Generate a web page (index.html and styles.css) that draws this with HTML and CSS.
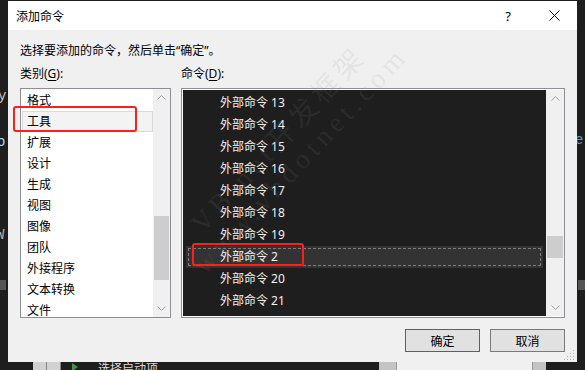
FILE: index.html
```html
<!DOCTYPE html>
<html lang="zh-CN">
<head>
    <meta charset="UTF-8">
    <title>添加命令</title>
    <link rel="stylesheet" href="styles.css">
</head>
<body>
    <!-- editor behind the dialog -->
    <span class="bg-glyph g1">y</span>
    <span class="bg-glyph g2">o</span>
    <span class="bg-glyph g3">W</span>
    <span class="bg-block b1"></span>
    <span class="bg-glyph g4">e</span>
    <span class="bg-block b2"></span>

    <div class="dialog">
        <div class="titlebar">
            <div class="title">添加命令</div>
            <div class="cap-btn">?</div>
            <div class="cap-btn">
                <svg width="11" height="11" viewBox="0 0 11 11"><path d="M0.5 0.5 L10.5 10.5 M10.5 0.5 L0.5 10.5" stroke="#000" stroke-width="1" fill="none"/></svg>
            </div>
        </div>
        <div class="content">
            <div class="prompt">选择要添加的命令，然后单击“确定”。</div>
            <div class="columns">
                <div class="label">类别(<u>G</u>):</div>
                <div class="label">命令(<u>D</u>):</div>

                <div class="list cat-list">
                    <div class="cat-items">
                        <div class="cat-item">格式</div>
                        <div class="cat-item selected">工具</div>
                        <div class="cat-item">扩展</div>
                        <div class="cat-item">设计</div>
                        <div class="cat-item">生成</div>
                        <div class="cat-item">视图</div>
                        <div class="cat-item">图像</div>
                        <div class="cat-item">团队</div>
                        <div class="cat-item">外接程序</div>
                        <div class="cat-item">文本转换</div>
                        <div class="cat-item">文件</div>
                    </div>
                    <div class="scroll cat-scroll">
                        <div class="arrow"><svg width="9" height="5" viewBox="0 0 9 5"><path d="M0.5 4.5 L4.5 0.5 L8.5 4.5" stroke="#a0a0a0" fill="none"/></svg></div>
                        <div class="track"><div class="thumb"></div></div>
                        <div class="arrow"><svg width="9" height="5" viewBox="0 0 9 5"><path d="M0.5 0.5 L4.5 4.5 L8.5 0.5" stroke="#a0a0a0" fill="none"/></svg></div>
                    </div>
                </div>

                <div class="list cmd-list">
                    <div class="cmd-items">
                        <div class="cmd-item">外部命令 13</div>
                        <div class="cmd-item">外部命令 14</div>
                        <div class="cmd-item">外部命令 15</div>
                        <div class="cmd-item">外部命令 16</div>
                        <div class="cmd-item">外部命令 17</div>
                        <div class="cmd-item">外部命令 18</div>
                        <div class="cmd-item">外部命令 19</div>
                        <div class="cmd-item selected">外部命令 2</div>
                        <div class="cmd-item">外部命令 20</div>
                        <div class="cmd-item">外部命令 21</div>
                    </div>
                    <div class="scroll cmd-scroll">
                        <div class="arrow"><svg width="9" height="5" viewBox="0 0 9 5"><path d="M0.5 4.5 L4.5 0.5 L8.5 4.5" stroke="#a0a0a0" fill="none"/></svg></div>
                        <div class="track"><div class="thumb"></div></div>
                        <div class="arrow"><svg width="9" height="5" viewBox="0 0 9 5"><path d="M0.5 0.5 L4.5 4.5 L8.5 0.5" stroke="#a0a0a0" fill="none"/></svg></div>
                    </div>
                </div>
            </div>
            <div class="buttons">
                <button class="btn default">确定</button>
                <button class="btn">取消</button>
            </div>
        </div>
        <svg class="grip" width="12" height="12" viewBox="0 0 12 12">
            <rect x="10" y="2" width="1" height="1" fill="#b4b4b4"/>
            <rect x="7" y="5" width="1" height="1" fill="#b4b4b4"/>
            <rect x="10" y="5" width="1" height="1" fill="#b4b4b4"/>
            <rect x="4" y="8" width="1" height="1" fill="#b4b4b4"/>
            <rect x="7" y="8" width="1" height="1" fill="#b4b4b4"/>
            <rect x="10" y="8" width="1" height="1" fill="#b4b4b4"/>
            <rect x="1" y="11" width="1" height="1" fill="#b4b4b4"/>
            <rect x="4" y="11" width="1" height="1" fill="#b4b4b4"/>
            <rect x="7" y="11" width="1" height="1" fill="#b4b4b4"/>
            <rect x="10" y="11" width="1" height="1" fill="#b4b4b4"/>
        </svg>
    </div>

    <div class="statusbar">
        <div class="sb-dark w33"></div>
        <div class="sb-tab"></div>
        <div class="sb-tab"></div>
        <div class="sb-run">
            <svg width="6" height="8" viewBox="0 0 6 8"><path d="M0 0 L6 4 L0 8 Z" fill="#3c9a3c"/></svg>
            <span class="sb-text">选择启动项</span>
        </div>
        <div class="sb-grey w17"></div>
        <div class="sb-field"></div>
        <div class="sb-grey w13"></div>
        <div class="sb-dark flex1"></div>
    </div>

    <!-- annotations -->
    <div class="mark mark-cat"></div>
    <div class="mark mark-cmd"></div>

    <div class="watermark">
        <div>VB.net开发框架</div>
        <div>www.vbdotnet.com</div>
    </div>
</body>
</html>
```

FILE: styles.css
```css
body {
    margin: 0;
    width: 585px;
    height: 370px;
    overflow: hidden;
    position: relative;
    background: #1e1e1e;
    font-family: "Noto Sans", "Noto Sans CJK SC", sans-serif;
    font-size: 12px;
    color: #000;
}
.bg-glyph {
    position: absolute;
    font-family: "Liberation Mono", monospace;
    font-size: 14px;
    line-height: 16px;
}
.g1 { left: -2px; top: 88px; color: #c8c8c8; }
.g2 { left: -3px; top: 134px; color: #9cdcfe; }
.g3 { left: -4px; top: 227px; color: #b4b4b4; }
.g4 { left: 575px; top: 132px; color: #569cd6; }
.bg-block {
    position: absolute;
    background: #555;
}
.b1 { left: 0; top: 280px; width: 6px; height: 10px; }
.b2 { left: 578px; top: 280px; width: 7px; height: 10px; }

.dialog {
    position: relative;
    z-index: 1;
    margin: 1px 0 0 8px;
    width: 569px;
    height: 361px;
    background: #f0f0f0;
}
.titlebar {
    height: 29px;
    background: #fff;
    display: flex;
    align-items: center;
    padding-left: 8px;
}
.title {
    flex: 1;
}
.cap-btn {
    width: 46px;
    height: 29px;
    display: flex;
    align-items: center;
    justify-content: center;
    font-size: 13px;
}
.content {
    padding: 13px 12px 0 12px;
}
.prompt {
    line-height: 16px;
}
.columns {
    margin-top: 7px;
    display: grid;
    grid-template-columns: 151px 384px;
    column-gap: 10px;
    row-gap: 6px;
}
.label {
    line-height: 16px;
}
.label u {
    text-underline-offset: 2px;
}
.list {
    height: 230px;
    box-sizing: border-box;
    border: 1px solid #8e8f94;
    display: flex;
    background: #fff;
}
.cat-items {
    flex: 1;
    padding-top: 1px;
}
.cat-item {
    height: 21px;
    line-height: 21px;
    padding-left: 6px;
}
.cat-item.selected {
    margin-left: 1px;
    padding-left: 5px;
    background: #f3f3f3;
    box-shadow: inset 0 0 0 1px #dadada;
}
.scroll {
    width: 17px;
    background: #f0f0f0;
    display: flex;
    flex-direction: column;
}
.cmd-scroll {
    width: 18px;
}
.arrow {
    height: 17px;
    display: flex;
    align-items: center;
    justify-content: center;
}
.track {
    flex: 1;
}
.thumb {
    background: #cdcdcd;
    margin: 0 1px;
}
.cat-scroll .thumb {
    margin-top: 110px;
    height: 64px;
}
.cmd-scroll .thumb {
    margin-top: 129px;
    height: 22px;
}
.cmd-list {
    padding: 1px 0 1px 1px;
}
.cmd-items {
    flex: 1;
    background: #1e1e1e;
    padding-top: 2px;
}
.cmd-item {
    height: 22px;
    line-height: 22px;
    padding-left: 37px;
    color: #f1f1f1;
}
.cmd-item.selected {
    position: relative;
    margin: 0 3px;
    padding-left: 34px;
    background: #333334;
}
.cmd-item.selected::after {
    content: "";
    position: absolute;
    left: 2px;
    right: 2px;
    top: 2px;
    bottom: 2px;
    border: 1px dashed #7d7d7d;
}
.buttons {
    margin-top: 11px;
    display: flex;
    justify-content: flex-end;
    gap: 10px;
}
.btn {
    width: 75px;
    height: 23px;
    padding: 0;
    border: 1px solid #7a7a7a;
    background: #e1e1e1;
    font-family: "Noto Sans", "Noto Sans CJK SC", sans-serif;
    font-size: 12px;
    color: #000;
}
.btn.default {
    border-color: #0078d7;
}
.grip {
    position: absolute;
    right: 2px;
    bottom: 2px;
}

.statusbar {
    height: 8px;
    display: flex;
    overflow: hidden;
}
.sb-dark { background: #1e1e1e; }
.w33 { width: 33px; }
.flex1 { flex: 1; }
.sb-tab {
    width: 13px;
    background: #d2d2d2;
    border-right: 1px solid #888;
}
.sb-run {
    width: 318px;
    background: #1e1e1e;
    display: flex;
    align-items: flex-start;
    padding: 1px 0 0 11px;
    box-sizing: border-box;
    gap: 20px;
}
.sb-text {
    color: #dcdcdc;
    font-size: 12px;
    line-height: 12px;
}
.sb-grey {
    background: #c4c4c4;
}
.w17 { width: 17px; }
.w13 { width: 13px; }
.sb-field {
    width: 135px;
    background: #f0f0f0;
    border-left: 1px solid #999;
    border-right: 1px solid #999;
}

.mark {
    position: absolute;
    z-index: 2;
    box-sizing: border-box;
    border: 2px solid #ff1e1e;
    border-radius: 3px;
}
.mark-cat {
    left: 13px;
    top: 106px;
    width: 124px;
    height: 26px;
}
.mark-cmd {
    left: 192px;
    top: 243px;
    width: 112px;
    height: 23px;
}
.watermark {
    position: absolute;
    z-index: 3;
    left: 125px;
    top: 120px;
    width: 330px;
    font-family: "Liberation Serif", "Noto Sans CJK SC", serif;
    font-size: 28px;
    line-height: 30px;
    letter-spacing: 5px;
    text-align: center;
    color: rgba(140, 140, 140, 0.13);
    transform: rotate(-47deg);
    pointer-events: none;
    white-space: nowrap;
}
```
